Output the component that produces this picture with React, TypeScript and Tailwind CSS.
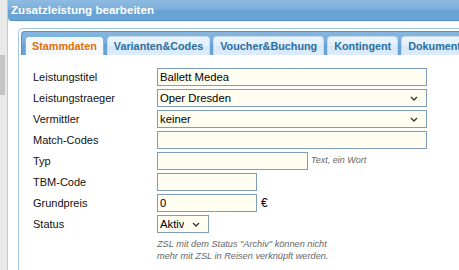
const font = "font-['Liberation_Sans',Arial,sans-serif]";

const tabs = ["Stammdaten", "Varianten&Codes", "Voucher&Buchung", "Kontingent", "Dokumente"];

function Chevron() {
  return (
    <svg width="8" height="5" viewBox="0 0 8 5" className="shrink-0">
      <path d="M1 1l3 3 3-3" fill="none" stroke="#333" strokeWidth="1.3" />
    </svg>
  );
}

function Field({ value = "", width, select }: { value?: string; width: string; select?: boolean }) {
  return (
    <div
      className={`flex h-[18px] items-center justify-between border border-[#7f9db9] bg-[#fffef0] pl-[2px] pr-[8px] text-[11.3px] text-black ${width}`}
    >
      <span className="truncate">{value}</span>
      {select && <Chevron />}
    </div>
  );
}

export default function App() {
  return (
    <div className={`flex h-[270px] w-[459px] overflow-hidden bg-[#e8e8e8] ${font}`}>
      <div className="flex w-[7px] shrink-0 flex-col">
        <div className="h-[55px]" />
        <div className="h-[40px] w-[5px] bg-[#c4c4c4]" />
      </div>
      <div className="flex flex-1 flex-col border-l border-[#c9c9c9] bg-white">
        <div className="flex h-[21px] items-center rounded-bl-[4px] border-b border-[#4f8fc8] bg-[linear-gradient(#8ebbe1,#7cb0dc_45%,#67a2d4_55%,#6aa4d5)] pl-[3px] text-[11.6px] font-bold text-white">
          Zusatzleistung bearbeiten
        </div>
        <div className="flex flex-1 flex-col pl-[10px] pt-[7px]">
          <div className="flex flex-1 flex-col rounded-tl-[5px] border-l border-t border-[#a6c9e2] pl-[2px] pt-[2px]">
            <div className="flex h-[24px] items-end gap-[3px] overflow-hidden rounded-tl-[4px] border-l border-t border-[#4f93d0] bg-[linear-gradient(#86b6de,#76acda_50%,#64a0d4_51%,#6aa4d6)] pl-[3px]">
              {tabs.map((t, i) => (
                <div
                  key={t}
                  className={`flex h-[19px] shrink-0 items-center rounded-t-[4px] border border-b-0 px-[6px] text-[10.8px] font-bold ${
                    i === 0
                      ? "h-[20px] -mb-px border-[#79b7e7] bg-[#f5f8f9] text-[#e17009]"
                      : "border-[#c5dbec] bg-[linear-gradient(#eaf4fd,#e2f0fc_50%,#d5e8f9_51%,#dcecfb)] text-[#2e6e9e]"
                  }`}
                >
                  {t}
                </div>
              ))}
            </div>
            <div className="grid grid-cols-[124px_auto] content-start items-center gap-y-[3px] pl-[12px] pt-[13px] text-[11px] text-[#111]">
              <span>Leistungstitel</span>
              <Field value="Ballett Medea" width="w-[270px]" />
              <span>Leistungstraeger</span>
              <Field value="Oper Dresden" width="w-[270px]" select />
              <span>Vermittler</span>
              <Field value="keiner" width="w-[270px]" select />
              <span>Match-Codes</span>
              <Field width="w-[270px]" />
              <span>Typ</span>
              <div className="flex items-center gap-[3px]">
                <Field width="w-[151px]" />
                <span className="text-[9px] italic text-[#666]">Text, ein Wort</span>
              </div>
              <span>TBM-Code</span>
              <Field width="w-[100px]" />
              <span>Grundpreis</span>
              <div className="flex items-center gap-[4px]">
                <Field value="0" width="w-[100px]" />
                <span className="text-[12px] text-black">€</span>
              </div>
              <span>Status</span>
              <Field value="Aktiv" width="w-[52px]" select />
              <div className="col-start-2 mt-[2px] text-[9.2px] leading-[12px] italic text-[#666]">
                ZSL mit dem Status "Archiv" können nicht
                <br />
                mehr mit ZSL in Reisen verknüpft werden.
              </div>
            </div>
          </div>
        </div>
      </div>
    </div>
  );
}
